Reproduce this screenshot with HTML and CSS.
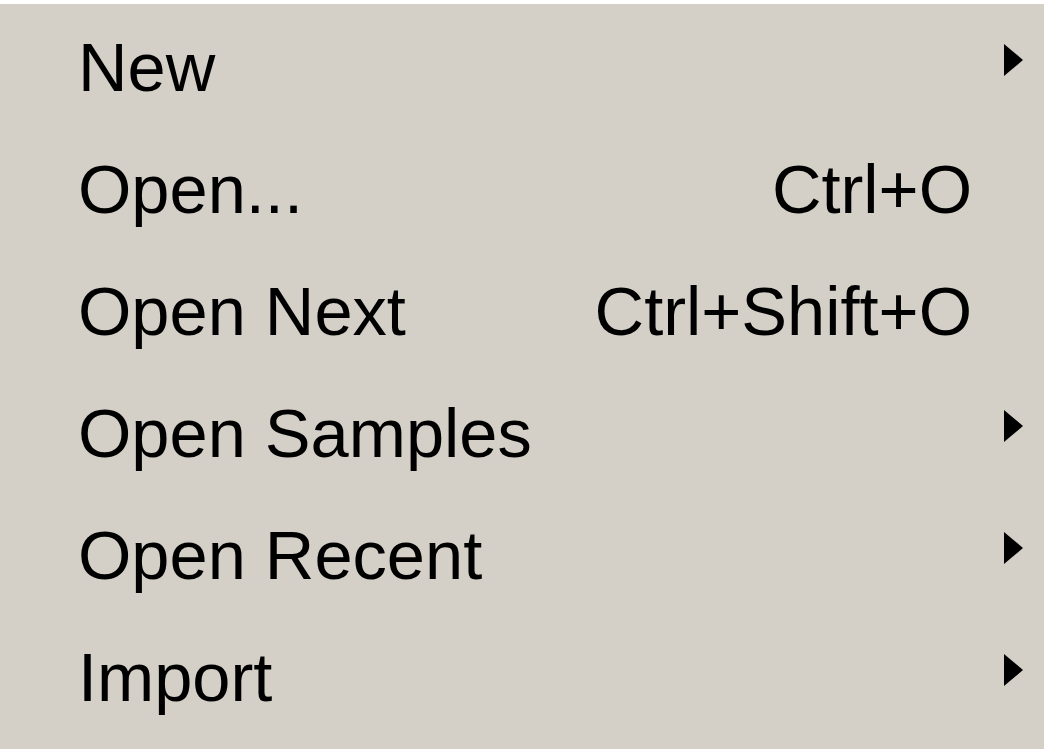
FILE: index.html
```html
<!DOCTYPE html>
<html>
<head>
<meta charset="utf-8">
<link rel="stylesheet" href="styles.css">
</head>
<body>
<div class="menu">
  <div class="item"><span class="label">New</span><span class="key"></span><span class="sub"><svg class="arrow" viewBox="0 0 20 34"><path d="M1 1 L20 17 L1 33 Z"/></svg></span></div>
  <div class="item"><span class="label">Open...</span><span class="key">Ctrl+O</span><span class="sub"></span></div>
  <div class="item"><span class="label">Open Next</span><span class="key">Ctrl+Shift+O</span><span class="sub"></span></div>
  <div class="item"><span class="label">Open Samples</span><span class="key"></span><span class="sub"><svg class="arrow" viewBox="0 0 20 34"><path d="M1 1 L20 17 L1 33 Z"/></svg></span></div>
  <div class="item"><span class="label">Open Recent</span><span class="key"></span><span class="sub"><svg class="arrow" viewBox="0 0 20 34"><path d="M1 1 L20 17 L1 33 Z"/></svg></span></div>
  <div class="item"><span class="label">Import</span><span class="key"></span><span class="sub"><svg class="arrow" viewBox="0 0 20 34"><path d="M1 1 L20 17 L1 33 Z"/></svg></span></div>
</div>
</body>
</html>
```

FILE: styles.css
```css
html, body {
  margin: 0;
  padding: 0;
  background: #d4d0c8;
}
body {
  width: 1044px;
  height: 749px;
  overflow: hidden;
}
.menu {
  border-top: 4px solid #ffffff;
  padding-top: 3px;
  font-family: "Liberation Sans", Arial, sans-serif;
  font-size: 68.6px;
  color: #000;
}
.item {
  display: flex;
  height: 122px;
  line-height: 122px;
  padding-left: 78px;
}
.label {
  flex: 1;
  white-space: nowrap;
}
.key {
  white-space: nowrap;
}
.sub {
  width: 72px;
  flex: none;
  display: flex;
  align-items: flex-start;
}
.arrow {
  width: 20px;
  height: 34px;
  margin-left: 31px;
  margin-top: 36px;
  fill: #000;
}
```
